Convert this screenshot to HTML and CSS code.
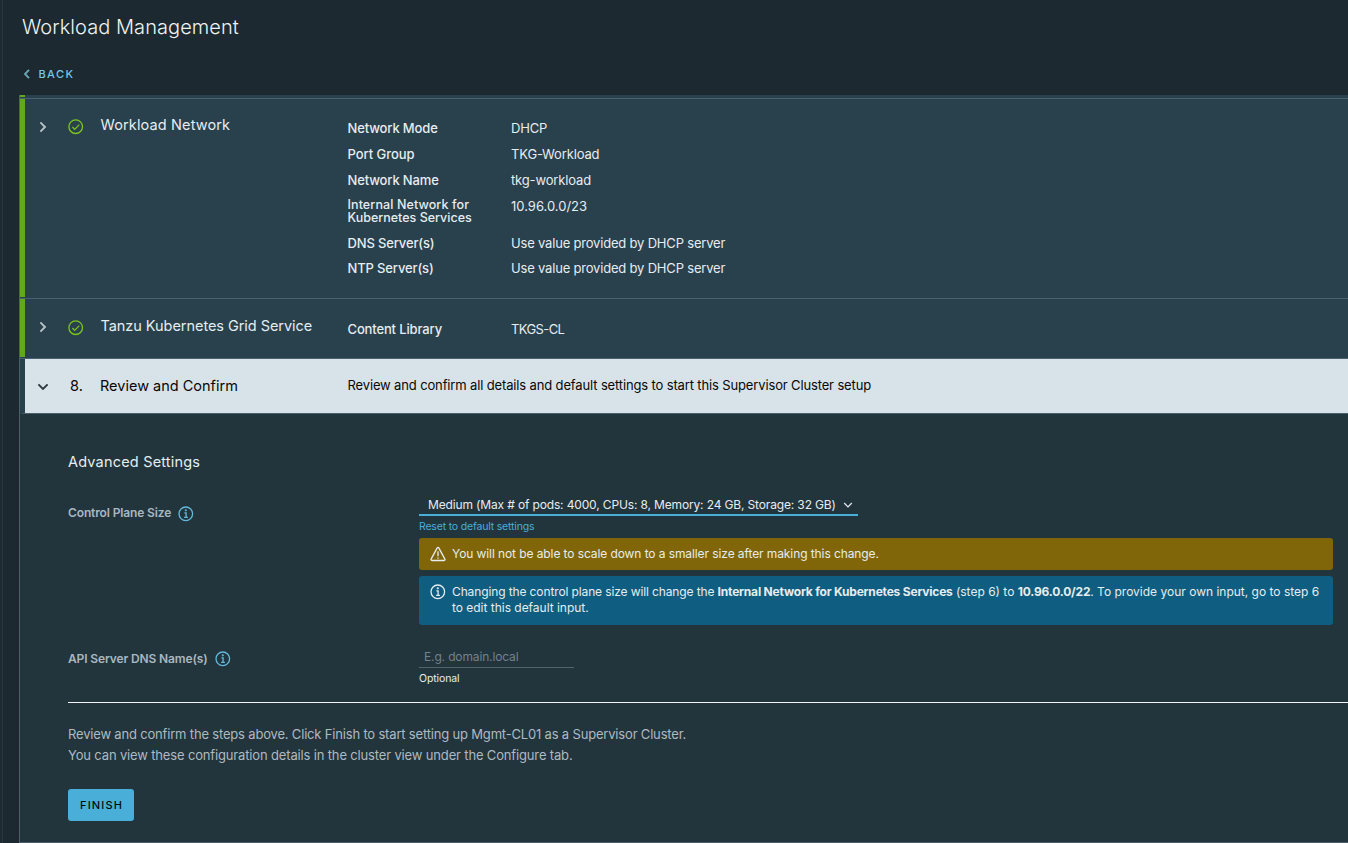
FILE: index.html
```html
<!DOCTYPE html>
<html lang="en">
<head>
<meta charset="utf-8">
<title>Workload Management</title>
<link rel="stylesheet" href="styles.css">
</head>
<body>
<svg class="defs" width="0" height="0" aria-hidden="true">
  <symbol id="check" viewBox="0 0 16 16"><circle cx="7.7" cy="7.7" r="6.8"/><path d="M4.4 8l2.3 2.4 4.6-4.8"/></symbol>
  <symbol id="info" viewBox="0 0 16 16"><circle cx="7.8" cy="7.8" r="6.8"/><path d="M6.4 6.8h1.7v4.4M6.1 11.3h3.8"/><circle cx="7.8" cy="4.3" r=".45"/></symbol>
  <symbol id="chevron" viewBox="0 0 12 12"><path d="M3.4 1.4L8 6l-4.6 4.6"/></symbol>
</svg>
<div class="app">
  <div class="rail"></div>
  <main class="page">
    <h1 class="title">Workload Management</h1>
    <a class="back"><svg class="back-icon" viewBox="0 0 8 10"><path d="M6 .8L2 5l4 4.2"/></svg><span class="back-text">BACK</span></a>
    <section class="wizard">
      <div class="step sliver"><div class="bar"></div></div>
      <div class="step network">
        <div class="bar"></div>
        <div class="step-head"><svg class="chev"><use href="#chevron"/></svg><svg class="ok"><use href="#check"/></svg><span class="step-name name-network">Workload Network</span></div>
        <dl class="details">
          <dt class="l-mode">Network Mode</dt><dd class="v-dhcp">DHCP</dd>
          <dt class="l-port">Port Group</dt><dd class="v-port">TKG-Workload</dd>
          <dt class="l-name">Network Name</dt><dd class="v-name">tkg-workload</dd>
          <dt class="two-line">Internal Network for<br><span class="l-kube">Kubernetes Services</span></dt><dd class="v-ip">10.96.0.0/23</dd>
          <dt class="l-dns">DNS Server(s)</dt><dd class="v-use">Use value provided by DHCP server</dd>
          <dt class="l-ntp">NTP Server(s)</dt><dd class="v-use">Use value provided by DHCP server</dd>
        </dl>
      </div>
      <div class="step tanzu">
        <div class="bar"></div>
        <div class="step-head"><svg class="chev"><use href="#chevron"/></svg><svg class="ok"><use href="#check"/></svg><span class="step-name name-tanzu">Tanzu Kubernetes Grid Service</span></div>
        <dl class="details"><dt class="l-lib">Content Library</dt><dd class="v-lib">TKGS-CL</dd></dl>
      </div>
      <div class="step active">
        <div class="step-head"><svg class="chev open"><use href="#chevron"/></svg><span class="number">8.</span><span class="step-name name-review">Review and Confirm</span></div>
        <p class="summary">Review and confirm all details and default settings to start this Supervisor Cluster setup</p>
      </div>
      <div class="content">
        <h2 class="subtitle">Advanced Settings</h2>
        <div class="field size-field">
          <div class="label"><span class="t-size">Control Plane Size</span><svg class="info"><use href="#info"/></svg></div>
          <div class="control">
            <div class="select"><span class="select-text">Medium (Max # of pods: 4000, CPUs: 8, Memory: 24 GB, Storage: 32 GB)</span><svg class="select-icon" viewBox="0 0 10 8"><path d="M1.2 2l3.8 3.8L8.8 2"/></svg></div>
            <a class="reset"><span class="reset-text">Reset to default settings</span></a>
            <div class="alert warning"><svg class="alert-icon" viewBox="0 0 16 16"><path d="M7.2 1.9a.9.9 0 0 1 1.6 0l6.1 11.2a.9.9 0 0 1-.8 1.4H1.9a.9.9 0 0 1-.8-1.4zM8 5.3v4.9M8 11.6v1.2"/></svg><p class="warning-text">You will not be able to scale down to a smaller size after making this change.</p></div>
            <div class="alert notice"><svg class="alert-icon"><use href="#info"/></svg><p class="notice-text">Changing the control plane size will change the <b>Internal Network for Kubernetes Services</b> <span class="notice-tail">(step 6) to <b>10.96.0.0/22</b>. To provide your own input, go to step 6</span><br><span class="notice-end">to edit this default input.</span></p></div>
          </div>
        </div>
        <div class="field api-field">
          <div class="label"><span class="t-api">API Server DNS Name(s)</span><svg class="info"><use href="#info"/></svg></div>
          <div class="control">
            <div class="input"><span class="placeholder">E.g. domain.local</span></div>
            <div class="help"><span class="help-text">Optional</span></div>
          </div>
        </div>
        <div class="finish-area">
          <p class="f1">Review and confirm the steps above. Click Finish to start setting up Mgmt-CL01 as a Supervisor Cluster.</p>
          <p class="f2">You can view these configuration details in the cluster view under the Configure tab.</p>
          <button class="finish"><span class="finish-text">FINISH</span></button>
        </div>
      </div>
    </section>
  </main>
</div>
</body>
</html>
```
FILE: styles.css
```css
* { box-sizing: border-box; }
body { margin: 0; background: #1c2930; color: #e6edf0; font: 13px/16px Inter, "Open Sans", sans-serif; overflow: hidden; }
h1, h2, p, dl, dd, dt { margin: 0; font-weight: 400; }
svg { fill: none; stroke: currentColor; flex: none; }
.defs { position: absolute; }
.app { display: flex; width: 1348px; height: 843px; white-space: nowrap; }
.rail { width: 3px; background: #1e2a31; border-right: 1px solid #2a363f; flex: none; }
.page { flex: 1; padding-left: 16px; min-width: 0; }
.title { padding: 13px 0 0 3px; font-size: 20px; line-height: 28px; font-weight: 300; color: #eef3f5; height: 62px; letter-spacing: .06px; }
.back { display: flex; align-items: center; height: 24px; margin-bottom: 9px; padding-left: 4px; gap: 7.5px; color: #79c6e6; font-size: 11px; font-weight: 500; }
.back-icon { width: 8px; height: 10px; stroke-width: 1.9; color: #6aa5b5; }
.back-text { letter-spacing: 1.4px; }
.wizard { height: 748px; border-left: 1px solid #4b5e69; border-bottom: 1px solid #4b5e69; background: #22343c; }
.step { display: flex; background: #29404d; border-bottom: 1px solid #4a606c; }
.bar { width: 5px; background: #60a81d; margin-bottom: 1px; }
.sliver { height: 4px; }
.network { height: 200px; }
.tanzu { height: 60px; }
.active { height: 55px; border-left: 5px solid #29404d; background: #d8e3e9; color: #080808; }
.step-head { width: 322px; display: flex; align-items: flex-start; padding-left: 12px; flex: none; }
.chev { width: 12px; height: 12px; margin: 22px 20px 0 0; stroke-width: 1.9; color: #b5c2c8; }
.ok { width: 16px; height: 16px; margin: 20px 16px 0 -1px; color: #7dc51e; stroke-width: 1.3; }
.step-name { font-size: 14.5px; line-height: 20px; margin-top: 16px; }
.tanzu .step-name { margin-top: 17px; }
.name-network { padding-left: .5px; letter-spacing: .13px; }
.name-tanzu { padding-left: .5px; letter-spacing: -.05px; }
.tanzu .ok { margin-top: 21px; }
.chev.open { transform: rotate(90deg); color: #2c3a40; }
.number { width: 30px; margin-left: 1px; font-size: 14.5px; line-height: 20px; margin-top: 17px; }
.active .step-name { margin-top: 17px; }
.details { display: grid; grid-template-columns: 163.5px auto; align-content: start; line-height: 26px; padding: 16px 0 0 .5px; grid-template-rows: 26px 26px 26px 37px 25px 25px; letter-spacing: -.15px; }
.details dt { font-weight: 500; letter-spacing: -.14px; }
.details .two-line { font-size: 12.5px; line-height: 13px; padding-top: 5px; letter-spacing: .1px; }
.details .l-port { letter-spacing: -.05px; }
.l-kube { letter-spacing: 0; }
.v-use { letter-spacing: -.19px; }
.v-ip { letter-spacing: 0; }
.v-lib { letter-spacing: -.6px; }
.tanzu .details { padding-top: 17px; grid-template-rows: 26px; }
.summary { line-height: 20px; padding: 16px 0 0 .5px; letter-spacing: -.14px; }
.content { padding-left: 48px; }
.subtitle { font-size: 14.5px; line-height: 20px; padding-top: 38px; height: 80px; letter-spacing: .19px; }
.field { display: flex; }
.size-field { height: 145px; }
.api-field { height: 63px; }
.label { width: 351px; flex: none; display: flex; gap: 6px; height: 16px; margin-top: 11px; font-size: 12px; font-weight: 600; color: #a9b7c0; letter-spacing: -.13px; }
.t-size { width: 104px; }
.t-api { width: 141px; }
.info { width: 16px; height: 16px; margin-top: 1px; color: #65b8da; stroke-width: 1.3; }
.api-field .label { margin-top: 12px; }
.api-field .info { margin-top: 0; }
.control { width: 914px; }
.select { display: flex; align-items: center; width: 439px; height: 22px; border-bottom: 2px solid #49afd9; padding: 1px 5px 0 9px; justify-content: space-between; font-size: 12px; letter-spacing: -.145px; }
.select-icon { width: 10px; height: 8px; stroke-width: 1.2; }
.reset { display: block; color: #49afd9; font-size: 10.5px; line-height: 16px; padding-top: 3px; height: 22px; letter-spacing: -.18px; }
.alert { border-radius: 3px; display: flex; padding: 8px 0 0 11px; gap: 6px; font-size: 12px; }
.warning { height: 32px; background: #806608; margin-bottom: 6px; letter-spacing: -.09px; }
.notice { height: 49px; background: #0f5d80; letter-spacing: -.12px; }
.alert-icon { width: 16px; height: 16px; stroke-width: 1.3; }
.notice b { font-weight: 700; letter-spacing: -.2px; }
.notice-tail { letter-spacing: 0; }
.notice-end { letter-spacing: -.02px; }
.input { width: 155px; height: 29px; border-bottom: 1px solid #53636b; padding: 10px 0 0 5px; font-size: 12px; color: #73828c; letter-spacing: -.14px; }
.help { padding-top: 3px; font-size: 10.5px; letter-spacing: -.12px; }
.finish-area { border-top: 1px solid #f2f5f6; padding-top: 21px; line-height: 21px; color: #aebac1; }
.f1 { letter-spacing: -.178px; }
.f2 { letter-spacing: -.155px; }
.finish { display: flex; align-items: center; justify-content: center; margin-top: 23px; width: 66px; height: 32px; padding: 0; border: 0; border-radius: 3px; background: #49afd9; color: #050a0c; font: 500 11px Inter, sans-serif; }
.finish-text { padding-left: 1px; letter-spacing: 1.15px; }
```
